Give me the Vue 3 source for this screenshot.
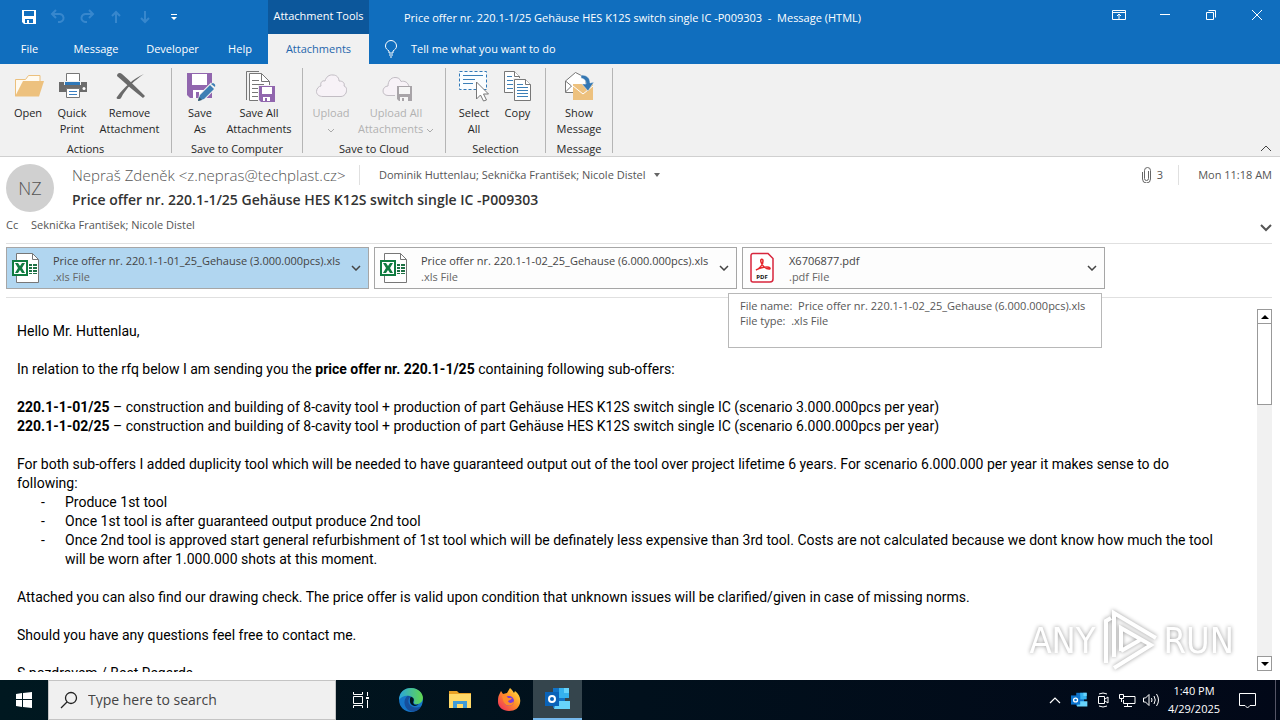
<template>
  <div class="desktop">
    <div class="window">
      <!-- title bar -->
      <header class="titlebar">
        <div class="quick">
          <button class="qa" aria-label="Save">
            <svg width="16" height="16" viewBox="0 0 16 16"><path d="M1 1h14v14H3l-2-2z" fill="#fff" /><path d="M3 2h10v5H3zM4 10h8v4H4z" fill="#106ebe" /><path d="M6 11h2v3H6z" fill="#fff" /></svg>
          </button>
          <button class="qa dim" aria-label="Undo">
            <svg width="16" height="16" viewBox="0 0 16 16"><path d="M6 1L2 5l4 4M2 5h7a4 4 0 0 1 1 8H8" /></svg>
          </button>
          <button class="qa dim" aria-label="Redo">
            <svg width="16" height="16" viewBox="0 0 16 16"><path d="M10 1l4 4-4 4M14 5H7a4 4 0 0 0-1 8h2" /></svg>
          </button>
          <button class="qa dim" aria-label="Previous item">
            <svg width="16" height="16" viewBox="0 0 16 16"><path d="M8 14V3M4 7l4-4 4 4" /></svg>
          </button>
          <button class="qa dim" aria-label="Next item">
            <svg width="16" height="16" viewBox="0 0 16 16"><path d="M8 2v11M4 9l4 4 4-4" /></svg>
          </button>
          <button class="qa" aria-label="Customize toolbar">
            <svg width="16" height="16" viewBox="0 0 16 16"><path d="M5 5h6v1H5zM5 8h6l-3 3z" fill="#fff" /></svg>
          </button>
        </div>
        <div class="context">Attachment Tools</div>
        <h1 class="title">Price offer nr. 220.1-1/25 Gehäuse HES K12S switch single IC -P009303&nbsp; -&nbsp; Message (HTML)</h1>
        <div class="winbtns">
          <button aria-label="Ribbon display options">
            <svg width="14" height="12" viewBox="0 0 14 12"><path d="M.5 1.5h13v9H.5zM.5 3.5h13M7 10V5M5 7l2-2 2 2" /></svg>
          </button>
          <button aria-label="Minimize">
            <svg width="12" height="12" viewBox="0 0 12 12"><path d="M1 5.500h10" /></svg>
          </button>
          <button aria-label="Restore">
            <svg width="12" height="12" viewBox="0 0 12 12"><path d="M1.500 3.500h7v7h-7zM3.500 1.500h7v7" /></svg>
          </button>
          <button aria-label="Close">
            <svg width="12" height="12" viewBox="0 0 12 12"><path d="M1 1l10 10M11 1L1 11" /></svg>
          </button>
        </div>
      </header>

      <nav class="tabs">
        <button v-for="t in tabs" :key="t" class="tab" :class="{ active: t === activeTab }" @click="activeTab = t">{{ t }}</button>
        <button class="tell">
          <svg width="14" height="18" viewBox="0 0 14 18"><path d="M5 13v-2C3 9.500 1.500 8.500 1.500 6a5.500 5.500 0 0 1 11 0c0 2.500-1.500 3.500-3.500 5v2zM5 15h4M6 17h2" /></svg>
          Tell me what you want to do
        </button>
      </nav>

      <!-- ribbon -->
      <section class="ribbon">
        <div class="group">
          <div class="cmds">
            <button class="cmd">
              <svg class="ico" viewBox="0 0 32 32"><path d="M3.500 26V9.500h10l3-4H28v6" fill="#fffaf0" stroke="#ecc07c" /><path d="M11 11h21l-5 15.500H3z" fill="#edc17e" /></svg>
              <span>Open</span>
            </button>
            <button class="cmd">
              <svg class="ico" viewBox="0 0 32 32"><path d="M3 12h28v10H3z" fill="#6b6b6b" /><path d="M10.500 3.500h13V12h-13z" fill="#fff" stroke="#777" /><path d="M8 11h17v4H8z" fill="#f1f1f1" /><path d="M9 12h15v3H9z" fill="#2f78b8" /><path d="M10.500 18.500h13v9h-13z" fill="#fff" stroke="#777" /><path d="M13 21.500h8M13 24.500h8" stroke="#3b7fc0" /><circle cx="28" cy="18.500" r="1.500" fill="#fff" /></svg>
              <span>Quick<br>Print</span>
            </button>
            <button class="cmd wide">
              <svg class="ico" viewBox="0 0 32 32"><path d="M3 6c0-3 3-4 5-2 8 7 15 14 23 22l-2 2C20 21 12 14 3 6z" fill="#6a6a6a" /><path d="M30 4c-9 6-18 14-23 24-1 2-6 1-4-1C10 17 19 9 30 4z" fill="#6a6a6a" /></svg>
              <span>Remove<br>Attachment</span>
            </button>
          </div>
          <div class="glabel">Actions</div>
        </div>

        <div class="group">
          <div class="cmds">
            <button class="cmd">
              <svg class="ico" viewBox="0 0 32 32"><path d="M3 3h25v25H6l-3-3z" fill="#9166ae" /><path d="M8 4h15v11H8z" fill="#fff" /><path d="M9 20h12v8H9z" fill="#fff" /><path d="M12 22h3v6h-3z" fill="#9166ae" /><path d="M15 30l1-5L27 14l4 4-11 11z" fill="#f1f1f1" stroke="#f1f1f1" stroke-width="2" /><path d="M14 31l2-6L26 15l4 4-10 10zM27 14l2-1q3 1 2 4z" fill="#3d7fb4" /><path d="M14 31l1-4 3 3z" fill="#356" /></svg>
              <span>Save<br>As</span>
            </button>
            <button class="cmd saveall">
              <svg class="ico" viewBox="0 0 32 32"><path d="M3.500 30V1.500H16" fill="none" stroke="#777" /><path d="M6.500 3.500h12l8 8v19h-20z" fill="#fff" stroke="#777" /><path d="M18.500 3.500v8h8M9 10.500h7M9 14.500h12M9 18.500h7M9 22.500h7M9 26.500h7" fill="none" stroke="#777" /><path d="M15 15h17v17H15z" fill="#f1f1f1" /><path d="M16 16h16v16H18l-2-2z" fill="#9166ae" /><path d="M19 17h10v7H19zM20 27h7v4h-7z" fill="#fff" /><path d="M22 28h2v4h-2z" fill="#9166ae" /></svg>
              <span>Save All<br>Attachments</span>
            </button>
          </div>
          <div class="glabel">Save to Computer</div>
        </div>

        <div class="group">
          <div class="cmds">
            <button class="cmd" disabled>
              <svg class="ico" viewBox="0 0 32 32"><path :d="cloud" fill="#f7f2f7" stroke="#c2bdc4" /></svg>
              <span>Upload<br><svg class="drop" viewBox="0 0 8 5"><path d="M1 1l3 3 3-3" fill="none" stroke="#aaa" /></svg></span>
            </button>
            <button class="cmd upall" disabled>
              <svg class="ico" viewBox="0 0 32 32"><path d="M15 25.500H8c-3 0-5-2-5-4.500s2-5 5-5c0-5 3-8.500 7-8.500 3 0 5 1 6 4 4-1 7 1 8 5" fill="#f7f2f7" stroke="#c2bdc4" /><path d="M17 16h15v15H19l-2-2z" fill="#a8a4a8" /><path d="M19 17h11v7H19zM20 27h8v4h-8z" fill="#f5f5f5" /><path d="M22 28h2v3h-2z" fill="#a8a4a8" /></svg>
              <span>Upload All<br>Attachments <svg class="drop" viewBox="0 0 8 5"><path d="M1 1l3 3 3-3" fill="none" stroke="#aaa" /></svg></span>
            </button>
          </div>
          <div class="glabel">Save to Cloud</div>
        </div>

        <div class="group">
          <div class="cmds">
            <button class="cmd">
              <svg class="ico" viewBox="0 0 32 32"><path d="M1.500 1.500h27v18h-27z" fill="#fafdff" stroke="#2f78b8" stroke-dasharray="3 2" /><path d="M5 5.500h20M5 9.500h12M5 13.500h10" stroke="#3b7fb8" /><path d="M18.500 12v17l4-4 3 6 3-1-3-6h5z" fill="#fff" stroke="#777" /></svg>
              <span>Select<br>All</span>
            </button>
            <button class="cmd copy">
              <svg class="ico" viewBox="0 0 32 32"><g stroke="#777" fill="#fff"><path d="M2.500 1.500h10l5 5v16h-15z" /><path d="M12.500 1.500v5h5" /></g><path d="M5 6.500h5M5 10.500h8M5 14.500h8M5 18.500h8" stroke="#3b7fb8" /><path d="M11 8h14l5 6v17H11z" fill="#f1f1f1" /><g stroke="#777" fill="#fff"><path d="M12.500 9.500h11l5 5v16h-16z" /><path d="M23.500 9.500v5h5" /></g><path d="M15 14.500h6M15 17.500h11M15 20.500h11M15 23.500h11M15 26.500h11" stroke="#3b7fb8" /></svg>
              <span>Copy</span>
            </button>
          </div>
          <div class="glabel">Selection</div>
        </div>

        <div class="group">
          <div class="cmds">
            <button class="cmd">
              <svg class="ico" viewBox="0 0 32 32"><path d="M10 22.500H2.500V11l10-8.500L23 8v6" fill="#fff" stroke="#777" /><path d="M2.500 11l6 5-6 6" fill="none" stroke="#777" /><path d="M10 14h20v16H10z" fill="#edc17e" /><path d="M10 16l10 8 10-8" fill="none" stroke="#fff" /><path d="M18 5c6 0 9 3 9 8l4-1-6 9-6-7 4 0c0-3-1-5-5-6z" fill="#3477b2" stroke="#f1f1f1" stroke-width=".5" /></svg>
              <span>Show<br>Message</span>
            </button>
          </div>
          <div class="glabel">Message</div>
        </div>

        <button class="collapse" aria-label="Collapse the ribbon">
          <svg width="12" height="7" viewBox="0 0 12 7"><path d="M1 6l5-5 5 5" fill="none" stroke="#444" /></svg>
        </button>
      </section>

      <!-- message header -->
      <section class="head">
        <div class="avatar">NZ</div>
        <div class="who">
          <div class="line">
            <span class="from">Nepraš Zdeněk &lt;z.nepras@techplast.cz&gt;</span>
            <span class="vsep"></span>
            <span class="to">Dominik Huttenlau; Seknička František; Nicole Distel</span>
            <svg class="caret" width="6" height="4" viewBox="0 0 6 4"><path d="M0 0h6L3 4z" fill="#666" /></svg>
          </div>
          <h2 class="subject">Price offer nr. 220.1-1/25 Gehäuse HES K12S switch single IC -P009303</h2>
        </div>
        <div class="meta">
          <svg width="9" height="16" viewBox="0 0 9 16"><path d="M6.500 4v7.500a2 2 0 0 1-4 0V3.500a3 3 0 0 1 6 0V12a4 4 0 0 1-8 0V5" fill="none" stroke="#666" /></svg>
          <span>3</span>
          <span class="vsep"></span>
          <time>Mon 11:18 AM</time>
        </div>
      </section>
      <div class="cc">
        <span class="cclabel">Cc</span>
        <span>Seknička František; Nicole Distel</span>
        <button class="expand" aria-label="Expand header">
          <svg width="12" height="8" viewBox="0 0 12 8"><path d="M1 1l5 5 5-5" fill="none" stroke="#555" stroke-width="2" /></svg>
        </button>
      </div>

      <div class="files">
        <button v-for="(f, i) in files" :key="f.name" class="file" :class="{ sel: i === selected }" @click="selected = i">
          <svg v-if="f.type === 'xls'" width="28" height="32" viewBox="0 0 28 32">
            <path d="M4.500 1.500h16l6 6v23h-22z" fill="#fff" stroke="#777" /><path d="M20.500 1.500v6h6" fill="none" stroke="#777" />
            <path d="M17 12h3v2h-3zM21 12h4v2h-4zM17 15h3v2h-3zM21 15h4v2h-4zM17 18h3v2h-3zM21 18h4v2h-4zM17 21h3v1h-3zM21 21h4v1h-4z" fill="#1e7145" />
            <path d="M0 8h16v16H0z" fill="#107c41" /><path d="M2 10h12v12H2z" fill="#fff" /><path d="M3 11h3l2 3 2-3h3l-3 5 3 5h-3l-2-3-2 3H3l3-5z" fill="#107c41" />
          </svg>
          <svg v-else width="28" height="32" viewBox="0 0 28 32">
            <path d="M5 1.500h15l5 5V27a3 3 0 0 1-3 3H5a2 2 0 0 1-2-2V3.500a2 2 0 0 1 2-2z" fill="#fff" stroke="#d7263d" stroke-width="1.500" />
            <path d="M8 18c3-1 7-5 7-9 0-3-3-2-2 1 1 4 5 7 8 7 2 0 1-2-2-2-4 0-8 1-11 3z" fill="none" stroke="#e5252a" stroke-width="1.500" />
            <text x="14" y="27" text-anchor="middle" font-size="6" font-weight="700" fill="#111">PDF</text>
          </svg>
          <span class="fname">{{ f.name }}<br><small>.{{ f.type }} File</small></span>
          <svg class="fdrop" width="10" height="6" viewBox="0 0 10 6"><path d="M1 1l4 4 4-4" fill="none" stroke="#444" stroke-width="1.500" /></svg>
        </button>
        <div class="tip" role="tooltip">File name:&nbsp; Price offer nr. 220.1-1-02_25_Gehause (6.000.000pcs).xls<br>File type:&nbsp; .xls File</div>
      </div>

      <!-- message text -->
      <main class="reader">
        <article class="body">
          <p>Hello Mr. Huttenlau,</p>
          <p>In relation to the rfq below I am sending you the <b>price offer nr. 220.1-1/25</b> containing following sub-offers:</p>
          <p>
            <b>220.1-1-01/25</b> – construction and building of 8-cavity tool + production of part Gehäuse HES K12S switch single IC (scenario 3.000.000pcs per year)<br>
            <b>220.1-1-02/25</b> – construction and building of 8-cavity tool + production of part Gehäuse HES K12S switch single IC (scenario 6.000.000pcs per year)
          </p>
          <div class="block">
            For both sub-offers I added duplicity tool which will be needed to have guaranteed output out of the tool over project lifetime 6 years. For scenario 6.000.000 per year it makes sense to do<br>following:
            <ul>
              <li>Produce 1st tool</li>
              <li>Once 1st tool is after guaranteed output produce 2nd tool</li>
              <li>Once 2nd tool is approved start general refurbishment of 1st tool which will be definately less expensive than 3rd tool. Costs are not calculated because we dont know how much the tool<br>will be worn after 1.000.000 shots at this moment.</li>
            </ul>
          </div>
          <p>Attached you can also find our drawing check. The price offer is valid upon condition that unknown issues will be clarified/given in case of missing norms.</p>
          <p>Should you have any questions feel free to contact me.</p>
          <p>S pozdravem / Best Regards</p>
        </article>
        <div class="scroll">
          <button aria-label="Scroll up"><svg width="8" height="4" viewBox="0 0 8 4"><path d="M0 4h8L4 0z" /></svg></button>
          <div class="track"><div class="thumb"></div></div>
          <button aria-label="Scroll down"><svg width="8" height="4" viewBox="0 0 8 4"><path d="M0 0h8L4 4z" /></svg></button>
        </div>
      </main>
    </div>

    <div class="mark">
      <span>ANY</span>
      <svg width="60" height="64" viewBox="0 0 60 64" fill="none" stroke="#fff" stroke-width="4">
        <path d="M6 54V12l5-3M14 48V4l42 25" /><path d="M21 42V19l30 17L14 59" /><path d="M21 42l19-11" />
      </svg>
      <span>RUN</span>
    </div>

    <!-- taskbar -->
    <footer class="taskbar">
      <button class="start" aria-label="Start">
        <svg width="16" height="16" viewBox="0 0 16 16" fill="#fff"><path d="M0 2l6-1v6H0zM7 1l9-1v7H7zM0 8h6v7l-6-1zM7 8h9v8l-9-1z" /></svg>
      </button>
      <label class="search">
        <svg width="18" height="18" viewBox="0 0 18 18" fill="none" stroke="#222" stroke-width="1.300"><circle cx="11" cy="7" r="5.500" /><path d="M7 11l-6 6" /></svg>
        <input type="text" placeholder="Type here to search" aria-label="Search">
      </label>
      <button class="task view" aria-label="Task View">
        <svg width="18" height="18" viewBox="0 0 18 18" fill="none" stroke="#fff"><path d="M1.500 1v2.500h9V1M1.500 17v-2.500h9V17M1.500 5.500h9v7h-9zM15.500 1v4M15.500 9v8" /><path d="M14 6h3v2h-3z" fill="#fff" stroke="none" /></svg>
      </button>
      <button class="task" aria-label="Edge">
        <svg width="26" height="26" viewBox="0 0 24 24">
          <defs><linearGradient id="eg" x1="0" y1="0" x2="1" y2="0"><stop offset="0" stop-color="#2aa5dc" /><stop offset="1" stop-color="#62d84e" /></linearGradient></defs>
          <circle cx="12" cy="12" r="11" fill="#1575c8" /><path d="M1 12C1 5 6 1 12 1c7 0 11 5 11 9 0 4-3 6-6 6-2 0-3-1-2-3 0-3-3-5-6-5-4 0-7 2-8 4z" fill="url(#eg)" /><path d="M9 8c-4 3-4 9 0 13 4 3 10 2 12-3-4 2-9 1-11-3-1-3 0-5 2-6z" fill="#164f9c" /><path d="M12 9c3 1 3 3 2 5 0 2 2 3 5 2-3 3-8 1-8-3 0-2 0-3 1-4z" fill="#00141e" />
        </svg>
      </button>
      <button class="task" aria-label="File Explorer">
        <svg width="24" height="20" viewBox="0 0 24 20"><path d="M1 1h8l2 2h12v6H1z" fill="#e8a125" /><path d="M1 4h22v14H1z" fill="#ffd968" /><path d="M5 18v-7h14v7h-4v-4H9v4z" fill="#3f9bd8" /></svg>
      </button>
      <button class="task" aria-label="Firefox">
        <svg width="24" height="24" viewBox="0 0 24 24">
          <defs><linearGradient id="fx" x1="1" y1="0" x2="0" y2="1"><stop offset="0" stop-color="#fff04a" /><stop offset=".45" stop-color="#ff9326" /><stop offset="1" stop-color="#ef2163" /></linearGradient></defs>
          <path d="M2 7l2-4 2 3 4-1 3-5c2 2 3 3 4 5l1-2c4 3 6 7 5 12-1 5-5 8-11 8S1 19 1 14c0-3 0-5 1-7z" fill="url(#fx)" /><circle cx="12" cy="13" r="5" fill="#7b3bd6" /><path d="M5 8c3-1 5 0 6 2h4c-1 2-3 2-4 3 1 3 5 2 6 0 0 5-6 6-9 3-2-2-2-5-3-8z" fill="#ff8a2b" />
        </svg>
      </button>
      <button class="task running" aria-label="Outlook">
        <svg width="26" height="24" viewBox="0 0 26 24"><path :d="outlook[0]" fill="#1173c7" /><path :d="outlook[1]" fill="#35b1ee" /><path :d="outlook[2]" fill="#67d3fb" /><path :d="outlook[3]" fill="#0a63b8" /><circle cx="7" cy="12" r="3" fill="none" stroke="#fff" stroke-width="2" /></svg>
      </button>
      <div class="tray">
        <button aria-label="Show hidden icons"><svg width="12" height="7" viewBox="0 0 12 7" fill="none" stroke="#fff" stroke-width="1.200"><path d="M1 6l5-5 5 5" /></svg></button>
        <button aria-label="Outlook"><svg width="17" height="16" viewBox="0 0 26 24"><path :d="outlook[0]" fill="#1173c7" /><path :d="outlook[1]" fill="#35b1ee" /><path :d="outlook[2]" fill="#67d3fb" /><path :d="outlook[3]" fill="#0a72cc" /><circle cx="7" cy="12" r="3" fill="none" stroke="#fff" stroke-width="2" /></svg></button>
        <button aria-label="Meet Now"><svg width="12" height="16" viewBox="0 0 12 16" fill="none" stroke="#fff"><path d="M2 2q4-2 8 0M2 14q4 2 8 0M1.500 4.500h6v7h-6zM8 7l3-2v6L8 9" /></svg></button>
        <button aria-label="Network"><svg width="17" height="15" viewBox="0 0 17 15" fill="none" stroke="#fff"><path d="M5 3.500h11v7H4.500V7M8.500 11v3M5 13.500h8M.500 1.500h4v4h-4zM2.500 6v3" /></svg></button>
        <button aria-label="Volume"><svg width="17" height="14" viewBox="0 0 17 14" fill="none" stroke="#fff"><path d="M.500 5v4h2L6 12.500v-11L2.500 5zM8.500 5q1 2 0 4M11 3q2.500 4 0 8M13.500 1q4 6 0 12" /></svg></button>
        <div class="clock">1:40 PM<br>4/29/2025</div>
        <button class="note" aria-label="Notifications"><svg width="17" height="17" viewBox="0 0 17 17" fill="none" stroke="#fff"><path d="M.500 1.500h16v12H11L8.500 16 6 13.500H.500z" /></svg></button>
        <span class="peek"></span>
      </div>
    </footer>
  </div>
</template>

<script setup>
import { ref } from 'vue'

const tabs = ['File', 'Message', 'Developer', 'Help', 'Attachments']
const activeTab = ref('Attachments')

const files = [
  { name: 'Price offer nr. 220.1-1-01_25_Gehause (3.000.000pcs).xls', type: 'xls' },
  { name: 'Price offer nr. 220.1-1-02_25_Gehause (6.000.000pcs).xls', type: 'xls' },
  { name: 'X6706877.pdf', type: 'pdf' },
]
const selected = ref(0)

// shapes used by the icons
const cloud = 'M8 26.500c-4 0-6.500-2-6.500-5S4 16 6 16c-1-3 1-6 4-5 1-4 4-6.500 8-6 4 0 6 3 6 6 4 0 6 2 5 5 3 1 3 4 2 7-1 2-3 3.500-5 3.500z'
const outlook = ['M8 1h12v20H8z', 'M14 1h10v10H14z', 'M19 1h5v5h-5zM11 14l14 0v8H9z', 'M0 5h14v14H0z']
</script>

<style>
body {
  margin: 0;
  overflow: hidden;
}
</style>

<style scoped>
.desktop {
  position: relative;
  display: flex;
  flex-direction: column;
  height: 100vh;
  font-family: "Open Sans", "Noto Sans", sans-serif;
  font-size: 11px;
  line-height: 16px;
  color: #262626;
  background: #fff;
  white-space: nowrap;
}

button {
  font: inherit;
  color: inherit;
  background: none;
  border: 0;
  padding: 0;
}

svg {
  flex: none;
}

h1, h2, p {
  margin: 0;
}

.window {
  flex: 1;
  min-height: 0;
  display: flex;
  flex-direction: column;
}

/* title bar and tabs */
.titlebar {
  display: flex;
  height: 34px;
  background: #106ebe;
  color: #fff;
}

.quick {
  width: 268px;
  box-sizing: border-box;
  padding-left: 14px;
  display: flex;
  align-items: center;
}

.qa {
  width: 29px;
  height: 16px;
}

.dim svg {
  fill: none;
  stroke: #3787cd;
  stroke-width: 2;
}

.context {
  width: 101px;
  line-height: 32px;
  text-align: center;
  background: #0c579b;
}

.title {
  flex: 1;
  padding-left: 35px;
  font-size: 11px;
  font-weight: 400;
  line-height: 36px;
}

.winbtns {
  display: flex;
  height: 30px;
}

.winbtns button {
  width: 46px;
  display: grid;
  place-items: center;
}

.winbtns svg {
  fill: none;
  stroke: #fff;
}

.tabs {
  display: grid;
  grid-template-columns: 59px 74px 79px 56px 101px auto 1fr;
  height: 30px;
  background: #106ebe;
  color: #fff;
}

.tab.active {
  background: #f1f1f1;
  color: #1f66ac;
}

.tell {
  display: flex;
  align-items: center;
  gap: 13px;
  padding-left: 15px;
}

.tell svg {
  fill: none;
  stroke: #fff;
}

/* ribbon */
.ribbon {
  display: flex;
  height: 88px;
  padding: 4px 0 0;
  background: #f1f1f1;
  border-bottom: 1px solid #d0d0d0;
}

.group {
  height: 85px;
  box-sizing: border-box;
  padding: 2px 6px 0;
  border-right: 1px solid #b5b5b5;
  display: flex;
  flex-direction: column;
  justify-content: space-between;
}

.cmds {
  display: flex;
  align-items: flex-start;
}

.cmd {
  width: 44px;
  display: flex;
  flex-direction: column;
  align-items: center;
  gap: 3px;
}

.cmd.wide {
  width: 71px;
}

.cmd.saveall {
  width: 74px;
}

.cmd.upall {
  width: 86px;
}

.cmd.copy {
  width: 43px;
}

.cmd:only-child {
  width: 54px;
}

.cmd:disabled {
  color: #b1b1b1;
}

.ico {
  width: 32px;
  height: 32px;
}

.drop {
  width: 8px;
  height: 5px;
  vertical-align: middle;
}

.glabel {
  margin-bottom: -4px;
  text-align: center;
}

.collapse {
  margin-left: auto;
  align-self: flex-end;
  padding: 0 8px;
}

/* message header */
.head {
  display: flex;
  padding: 7px 8px 0 6px;
  color: #555;
}

.avatar {
  width: 48px;
  height: 48px;
  border-radius: 50%;
  background: #d0d0d0;
  font-size: 18px;
  font-weight: 300;
  line-height: 48px;
  text-align: center;
}

.who {
  flex: 1;
  padding-left: 18px;
}

.line,
.meta {
  display: flex;
  align-items: center;
  height: 22px;
}

.from {
  font-size: 15px;
  font-weight: 300;
  width: 287px;
}

.vsep {
  width: 1px;
  height: 20px;
  background: #e0e0e0;
}

.to {
  padding-left: 19px;
}

.caret {
  margin-left: 8px;
}

.subject {
  padding-top: 3px;
  font-size: 14px;
  line-height: 22px;
  font-weight: 600;
  color: #333;
}

.meta span {
  margin-left: 6px;
}

.meta .vsep {
  margin: 0 19px 0 15px;
}

.cc {
  display: flex;
  align-items: flex-start;
  margin: 5px 8px 0 6px;
  height: 26px;
  border-bottom: 1px solid #e0e0e0;
  color: #555;
}

.cclabel {
  width: 25px;
}

.expand {
  margin-left: auto;
  padding-top: 3px;
}

/* attachments */
.files {
  position: relative;
  display: flex;
  gap: 5px;
  margin: 0 8px 0 6px;
  padding: 3px 0 8px;
  border-bottom: 1px solid #e0e0e0;
}

.file {
  flex: 0 1 363px;
  height: 42px;
  box-sizing: border-box;
  padding: 0 7px 0 5px;
  border: 1px solid #a6a6a6;
  background: #fdfdfd;
  display: flex;
  align-items: center;
  text-align: left;
  color: #444;
}

.file.sel {
  background: #b1d6f0;
}

.fname {
  padding: 2px 0 0 13px;
}

.fname small {
  font-size: 11px;
  color: #666;
}

.fdrop {
  margin-left: auto;
}

.tip {
  position: absolute;
  left: 722px;
  top: 49px;
  z-index: 2;
  width: 350px;
  height: 49px;
  padding: 4px 11px 0;
  border: 1px solid #b8b8b8;
  background: #fff;
  line-height: 15px;
  color: #575757;
}

/* message text */
.reader {
  flex: 1;
  min-height: 0;
  display: flex;
  margin: 11px 8px 8px 17px;
}

.body {
  flex: 1;
  min-width: 0;
  overflow: hidden;
  padding-top: 13px;
  font-family: Roboto, "Open Sans", sans-serif;
  font-size: 14px;
  line-height: 19px;
  color: #000;
}

.body p,
.block {
  margin-bottom: 19px;
}

.body ul {
  margin: 0;
  padding: 0;
  list-style: none;
}

.body li {
  display: flow-root;
  padding-left: 48px;
}

.body li::before {
  content: "-";
  float: left;
  margin-left: -24px;
}

.scroll {
  width: 15px;
  margin-bottom: 1px;
  display: flex;
  flex-direction: column;
}

.scroll button {
  height: 15px;
  border: 1px solid #999;
  background: #fff;
  display: grid;
  place-items: center;
}

.track {
  flex: 1;
  background: #f1f1f1;
}

.thumb {
  height: 24%;
  border: 1px solid #999;
  border-top: 0;
  background: #fff;
}

/* watermark over the message */
.mark {
  position: absolute;
  right: 46px;
  bottom: 47px;
  display: flex;
  align-items: center;
  gap: 4px;
  font-family: "Liberation Sans Narrow", "DejaVu Sans Condensed", sans-serif;
  font-size: 36px;
  line-height: 64px;
  color: #fff;
  filter: drop-shadow(0 0 2px #999);
}

/* taskbar */
.taskbar {
  display: flex;
  height: 40px;
  background: linear-gradient(90deg, #001820, #020818);
  color: #fff;
}

.start {
  width: 48px;
}

.start,
.task,
.tray button {
  display: grid;
  place-items: center;
}

.search {
  width: 288px;
  box-sizing: border-box;
  display: flex;
  align-items: center;
  padding-left: 11px;
  gap: 10px;
  background: #f0f0f0;
  border: 1px solid #c4c4c4;
}

.search input {
  flex: 1;
  min-width: 0;
  border: 0;
  padding: 0;
  outline: 0;
  background: none;
  font: inherit;
  font-size: 14px;
}

.search input::placeholder {
  color: #444;
  opacity: 1;
}

.task {
  width: 49px;
}

.task.view {
  width: 50px;
}

.running {
  background: #35454d;
  border-bottom: 2px solid #76b9ed;
}

.tray {
  display: flex;
  margin-left: auto;
}

.tray button {
  width: 24px;
}

.clock {
  width: 62px;
  line-height: 18px;
  padding-top: 2px;
  text-align: center;
}

.tray .note {
  width: 44px;
}

.peek {
  width: 4px;
  margin-left: 6px;
  border-left: 1px solid #556;
}
</style>
